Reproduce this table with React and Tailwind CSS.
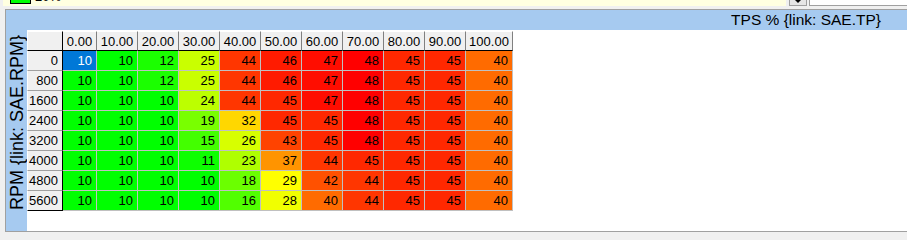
import React from "react";

const cols = ["0.00", "10.00", "20.00", "30.00", "40.00", "50.00", "60.00", "70.00", "80.00", "90.00", "100.00"];
const colW = ["w-[34px]", "w-[41px]", "w-[41px]", "w-[41px]", "w-[41px]", "w-[41px]", "w-[41px]", "w-[41px]", "w-[41px]", "w-[41px]", "w-[47px]"];

const rows = [
  ["0", [10, 10, 12, 25, 44, 46, 47, 48, 45, 45, 40]],
  ["800", [10, 10, 12, 25, 44, 46, 47, 48, 45, 45, 40]],
  ["1600", [10, 10, 10, 24, 44, 45, 47, 48, 45, 45, 40]],
  ["2400", [10, 10, 10, 19, 32, 45, 45, 48, 45, 45, 40]],
  ["3200", [10, 10, 10, 15, 26, 43, 45, 48, 45, 45, 40]],
  ["4000", [10, 10, 10, 11, 23, 37, 44, 45, 45, 45, 40]],
  ["4800", [10, 10, 10, 10, 18, 29, 42, 44, 45, 45, 40]],
  ["5600", [10, 10, 10, 10, 16, 28, 40, 44, 45, 45, 40]],
];

const colorCls = {
  10: "bg-[#00ff00]",
  11: "bg-[#0dff00]",
  12: "bg-[#1bff00]",
  15: "bg-[#43ff00]",
  16: "bg-[#51ff00]",
  18: "bg-[#6bff00]",
  19: "bg-[#79ff00]",
  23: "bg-[#afff00]",
  24: "bg-[#bcff00]",
  25: "bg-[#c9ff00]",
  26: "bg-[#d7ff00]",
  28: "bg-[#f1ff00]",
  29: "bg-[#ffff00]",
  32: "bg-[#ffd700]",
  37: "bg-[#ff9400]",
  40: "bg-[#ff6b00]",
  42: "bg-[#ff5100]",
  43: "bg-[#ff4300]",
  44: "bg-[#ff3600]",
  45: "bg-[#ff2800]",
  46: "bg-[#ff1b00]",
  47: "bg-[#ff0d00]",
  48: "bg-[#ff0000]",
};

export default function App() {
  return (
    <div className="w-[907px] h-[240px] bg-[#f0f0f0] overflow-hidden font-['Liberation_Sans',Arial,sans-serif] text-black">
      {/* top strip */}
      <div className="flex h-[6px]">
        <div className="w-[3px] bg-[#f0f0f0]" />
        <div className="w-[783px] bg-[#ffffe1] overflow-hidden flex items-end">
          <div className="ml-[7px] mb-[2px] w-[21px] h-[12px] border border-black bg-[#00ff00] shrink-0" />
          <div className="ml-[4px] mb-[3px] text-[13px] leading-[13px] shrink-0">20%</div>
        </div>
        <div className="w-[3px]" />
        <div className="w-[18px] bg-[#e6e6e6] border-x border-b border-[#a0a0a0] flex justify-center items-start">
          <div className="w-0 h-0 border-x-[3px] border-x-transparent border-t-[3px] border-t-black" />
        </div>
        <div className="w-[2px]" />
        <div className="flex-1 bg-white border-l border-b border-[#a0a0a0]" />
      </div>
      <div className="h-[3px]" />
      {/* panel */}
      <div className="ml-[5px] h-[223px] border-l border-t border-b border-[#a0a0a0] flex flex-col">
        <div className="h-[20px] bg-[#a6caf0] flex items-center justify-end pr-[26px] text-[15.5px] leading-none">
          TPS % {"{link: SAE.TP}"}
        </div>
        <div className="flex-1 flex">
          <div className="w-[21px] bg-[#a6caf0] flex items-end justify-center pb-[21px]">
            <div className="[writing-mode:vertical-rl] rotate-180 text-[18px] leading-none whitespace-nowrap">
              RPM {"{link: SAE.RPM}"}
            </div>
          </div>
          <div className="flex-1 bg-white pt-[1px] text-[13px]">
            <div className="flex">
              <div className="w-[36px] h-[20px] bg-[#f0f0f0] border-r border-b border-black border-l border-l-white border-t border-t-white" />
              {cols.map((c, i) => (
                <div
                  key={c}
                  className={`${colW[i]} h-[20px] bg-[#f0f0f0] border-r border-r-[#808080] border-b border-b-black border-t border-t-white flex items-center justify-center leading-none`}
                >
                  {c}
                </div>
              ))}
            </div>
            {rows.map(([label, vals], ri) => (
              <div key={label} className="flex">
                <div
                  className={`w-[36px] h-[20px] bg-[#f0f0f0] border-r border-r-black border-l border-l-white border-b ${
                    ri === rows.length - 1 ? "border-b-black" : "border-b-[#a0a0a0]"
                  } flex items-center justify-end pr-[4px] leading-none`}
                >
                  {label}
                </div>
                {vals.map((v, ci) => {
                  const sel = ri === 0 && ci === 0;
                  return (
                    <div
                      key={ci}
                      className={`${colW[ci]} h-[20px] border-r border-b border-[#c0c0c0] flex items-center justify-end pr-[4px] leading-none ${
                        sel ? "bg-[#0078d7] text-white" : colorCls[v]
                      }`}
                    >
                      {v}
                    </div>
                  );
                })}
              </div>
            ))}
          </div>
        </div>
      </div>
    </div>
  );
}
